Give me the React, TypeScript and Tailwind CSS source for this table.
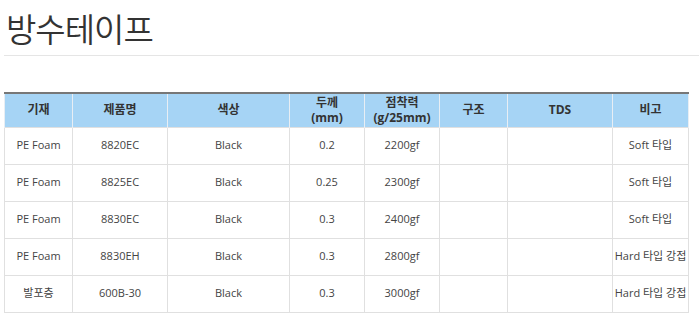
const rows = [
  ["PE Foam", "8820EC", "Black", "0.2", "2200gf", "", "", "Soft 타입"],
  ["PE Foam", "8825EC", "Black", "0.25", "2300gf", "", "", "Soft 타입"],
  ["PE Foam", "8830EC", "Black", "0.3", "2400gf", "", "", "Soft 타입"],
  ["PE Foam", "8830EH", "Black", "0.3", "2800gf", "", "", "Hard 타입 강접"],
  ["발포층", "600B-30", "Black", "0.3", "3000gf", "", "", "Hard 타입 강접"],
];

const widths = ["w-[68px]", "w-[95px]", "w-[122px]", "w-[75px]", "w-[75px]", "w-[68px]", "w-[105px]", "w-[76px]"];

export default function App() {
  return (
    <div
      className="w-[699px] h-[322px] bg-white pl-[4px] overflow-hidden"
      style={{ fontFamily: '"Open Sans", "Noto Sans CJK KR", sans-serif' }}
    >
      {/* Title */}
      <h1
        className="pl-[2px] pt-[6px] h-[55px] text-[33px] tracking-[-1px] leading-[44px] text-[#333] font-normal"
        style={{ fontFamily: '"Noto Sans CJK KR", sans-serif', fontWeight: 350 }}
      >
        방수테이프
      </h1>
      <div className="border-t border-[#e5e5e5]" />

      {/* Spec table */}
      <table className="mt-[36px] w-[684px] table-fixed border-collapse text-center">
        <thead>
          <tr className="h-[34px] bg-[#a6d4f5] border-t-2 border-[#777]">
            <th className={`${widths[0]} border-x border-[#e8eef4] text-[12px] font-bold text-[#333]`}>기재</th>
            <th className={`${widths[1]} border-x border-[#e8eef4] text-[12px] font-bold text-[#333]`}>제품명</th>
            <th className={`${widths[2]} border-x border-[#e8eef4] text-[12px] font-bold text-[#333]`}>색상</th>
            <th className={`${widths[3]} border-x border-[#e8eef4] text-[12px] leading-[15px] font-bold text-[#333]`}>
              <div>두께</div>
              <div>(mm)</div>
            </th>
            <th className={`${widths[4]} border-x border-[#e8eef4] text-[12px] leading-[15px] font-bold text-[#333]`}>
              <div>점착력</div>
              <div>(g/25mm)</div>
            </th>
            <th className={`${widths[5]} border-x border-[#e8eef4] text-[12px] font-bold text-[#333]`}>구조</th>
            <th className={`${widths[6]} border-x border-[#e8eef4] text-[12px] font-bold text-[#333]`}>TDS</th>
            <th className={`${widths[7]} border-x border-[#e8eef4] text-[12px] font-bold text-[#333]`}>비고</th>
          </tr>
        </thead>
        <tbody>
          {rows.map((r, i) => (
            <tr key={i} className="h-[37px]">
              {r.map((c, j) => (
                <td
                  key={j}
                  className="border border-[#e0e0e0] px-0 text-[11px] text-[#444] whitespace-nowrap"
                >
                  {c}
                </td>
              ))}
            </tr>
          ))}
        </tbody>
      </table>
    </div>
  );
}
